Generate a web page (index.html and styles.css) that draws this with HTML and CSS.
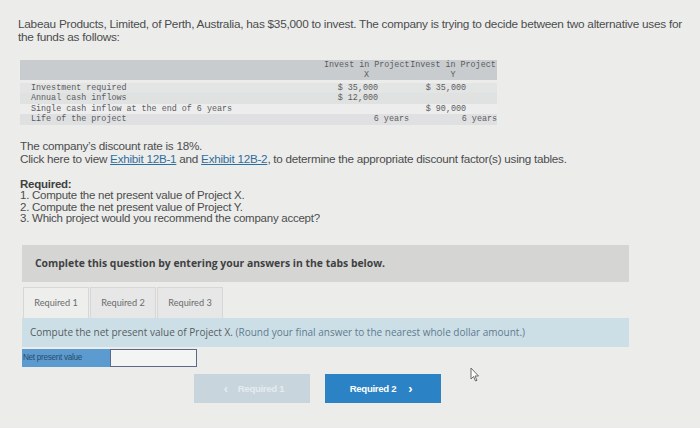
FILE: index.html
```html
<!DOCTYPE html>
<html>
<head>
<meta charset="utf-8">
<link rel="stylesheet" href="styles.css">
</head>
<body>
<div class="page">
  <p class="intro">Labeau Products, Limited, of Perth, Australia, has $35,000 to invest. The company is trying to decide between two alternative uses for the funds as follows:</p>

  <table class="data">
    <colgroup>
      <col class="c-lbl">
      <col class="c-x">
      <col class="c-y">
    </colgroup>
    <thead>
      <tr>
        <th class="lbl"></th>
        <th class="col">Invest in Project<br>X</th>
        <th class="col">Invest in Project<br>Y</th>
      </tr>
    </thead>
    <tbody>
      <tr class="gap"><td colspan="3"></td></tr>
      <tr class="r1"><td class="lbl">Investment required</td><td class="amt">$ 35,000</td><td class="amt">$ 35,000</td></tr>
      <tr class="r2"><td class="lbl">Annual cash inflows</td><td class="amt">$ 12,000</td><td class="amt"></td></tr>
      <tr class="r3"><td class="lbl">Single cash inflow at the end of 6 years</td><td class="amt"></td><td class="amt">$ 90,000</td></tr>
      <tr class="r4"><td class="lbl">Life of the project</td><td class="yrs">6 years</td><td class="yrs">6 years</td></tr>
    </tbody>
  </table>

  <p class="rate">The company’s discount rate is 18%.<br>Click here to view <a class="lnk">Exhibit 12B-1</a> and <a class="lnk">Exhibit 12B-2</a>, to determine the appropriate discount factor(s) using tables.</p>

  <div class="req">
    <div class="req-title">Required:</div>
    <div>1. Compute the net present value of Project X.</div>
    <div>2. Compute the net present value of Project Y.</div>
    <div>3. Which project would you recommend the company accept?</div>
  </div>

  <div class="panel">
    <div class="instr">Complete this question by entering your answers in the tabs below.</div>
    <div class="tabs">
      <div class="tab active">Required 1</div>
      <div class="tab">Required 2</div>
      <div class="tab">Required 3</div>
    </div>
    <div class="info">Compute the net present value of Project X. <span class="note">(Round your final answer to the nearest whole dollar amount.)</span></div>
    <div class="field">
      <div class="field-label">Net present value</div>
      <div class="field-input"></div>
    </div>
    <div class="nav">
      <div class="btn prev"><span class="chev">&lsaquo;</span> Required 1</div>
      <div class="btn next">Required 2 <span class="chev">&rsaquo;</span></div>
    </div>
  </div>
  <svg class="cursor" width="10" height="15" viewBox="0 0 10 15"><path d="M1 1 L1 12 L3.5 9.5 L5.5 14 L7 13.3 L5 9 L8.5 9 Z" fill="#fff" stroke="#6a6a6a" stroke-width="1"/></svg>
</div>
</body>
</html>
```
FILE: styles.css
```css
html, body { margin: 0; padding: 0; }
body {
  background: #ecedeb;
  width: 700px;
  height: 428px;
  overflow: hidden;
  font-family: "Liberation Sans", Arial, sans-serif;
  color: #4b4c4d;
}
.page {
  position: relative;
  padding: 18px 12px 0 18px;
}
.intro {
  margin: 0;
  font-size: 11.8px;
  line-height: 12.5px;
  letter-spacing: -0.25px;
}
.data {
  margin: 17px 0 0 2px;
  border-collapse: collapse;
  table-layout: fixed;
  width: 477px;
  font-family: "Liberation Mono", "DejaVu Sans Mono", monospace;
  font-size: 8.4px;
  color: #5a5c5e;
}
.c-lbl { width: 304px; }
.c-x { width: 85px; }
.c-y { width: 88px; }
.data thead tr { background: #c9ccce; }
.data th {
  font-weight: normal;
  line-height: 10px;
  padding: 0;
  height: 20px;
  text-align: center;
  white-space: nowrap;
  overflow: visible;
}
.data td { padding: 0; height: 10.5px; line-height: 10.5px; white-space: nowrap; }
.data td.lbl { padding-left: 11px; text-align: left; }
.data td.amt { text-align: right; padding-right: 31px; }
.data td.yrs { text-align: right; }
.data tr.gap td { height: 2.5px; line-height: 0; }
.data tr.r1 { background: #e3e4e4; }
.data tr.r2 { background: #e0e1e1; }
.data tr.r3 { background: #ededed; }
.data tr.r4 { background: #dfe0e1; }
.rate {
  margin: 14px 0 0 2px;
  font-size: 11.7px;
  line-height: 13px;
  letter-spacing: -0.25px;
}
.lnk { color: #2f6f9f; text-decoration: underline; }
.req {
  margin: 14px 0 0 2px;
  font-size: 11.5px;
  line-height: 11.5px;
  letter-spacing: -0.25px;
}
.req-title {
  font-weight: bold;
  color: #3e3f40;
}
.panel {
  margin: 20px 0 0 4px;
  width: 607px;
}
.instr {
  background: #d5d6d4;
  height: 37px;
  display: flex;
  align-items: center;
  padding-left: 13px;
  font-family: "Open Sans", Lato, sans-serif;
  font-weight: bold;
  font-size: 10.4px;
  color: #3f4142;
}
.tabs {
  display: flex;
  gap: 1px;
  margin-top: 5px;
  padding-left: 1px;
}
.tab {
  width: 66px;
  height: 31px;
  display: flex;
  align-items: center;
  justify-content: center;
  border: 1px solid #d6d7d6;
  border-bottom: none;
  background: #e6e7e6;
  font-family: Lato, "Open Sans", sans-serif;
  font-size: 9.2px;
  color: #6a6c6e;
  box-sizing: border-box;
}
.tab.active { background: #eeeeed; }
.info {
  background: #cddfe6;
  height: 29px;
  display: flex;
  align-items: center;
  padding-left: 8px;
  font-family: "Open Sans", Lato, sans-serif;
  font-size: 10px;
  color: #555d63;
  white-space: pre;
}
.note { color: #5f7b8f; }
.field {
  display: flex;
  margin-top: 2px;
  height: 18px;
}
.field-label {
  width: 88px;
  background: #5c9bd0;
  color: #2a4c6b;
  font-family: "Liberation Sans", Arial, sans-serif;
  font-size: 8.2px;
  letter-spacing: -0.3px;
  display: flex;
  align-items: center;
  padding-left: 1px;
  box-sizing: border-box;
}
.field-input {
  width: 87px;
  background: #f3f4f4;
  border: 1px solid #5b6a8a;
  box-sizing: border-box;
}
.nav {
  display: flex;
  gap: 15px;
  margin: 7px 0 0 172px;
}
.btn {
  width: 116px;
  height: 29px;
  display: flex;
  align-items: center;
  justify-content: center;
  gap: 4px;
  font-family: "Liberation Sans", Arial, sans-serif;
  font-weight: bold;
  font-size: 9.6px;
  letter-spacing: -0.3px;
}
.btn.prev { background: #c9d5dc; color: #e4ebef; }
.btn.next { background: #2b82c4; color: #ffffff; }
.chev { font-size: 13px; line-height: 1; margin: 0 4px; }
.btn.prev .chev { margin-right: 6px; }
.btn.next .chev { margin-left: 8px; }
.cursor { position: absolute; left: 470px; top: 367px; }
```
